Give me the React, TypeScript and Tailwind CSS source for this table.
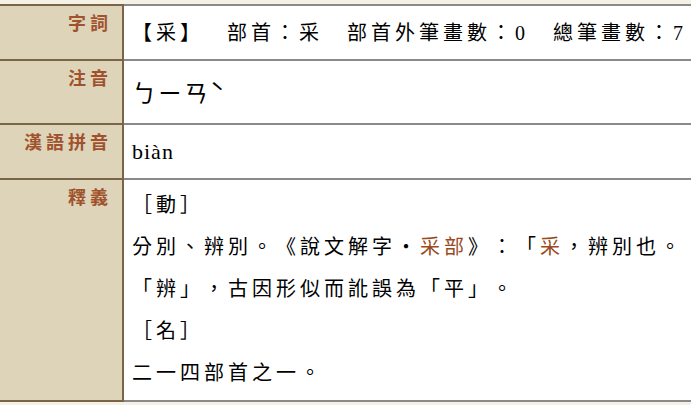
import React from 'react';

const labelCls =
  "w-[124px] shrink-0 bg-[#ddd4ba] border-r-2 border-b-2 border-[#7b6548] text-right pr-[10px] pt-[4px] text-[18px] leading-[24px] font-bold tracking-[4px] text-[#a0522d]";
const cellCls = "flex-1 border-b-2 border-[#8a8a8a] bg-white pl-[8px] text-black [text-spacing-trim:space-all]";

const Hl: React.FC<{ children: React.ReactNode }> = ({ children }) => (
  <span className="text-[#9a4a1c]">{children}</span>
);

export default function App() {
  return (
    <div
      className="h-[405px] w-[691px] overflow-hidden bg-[#f5f1e4] pt-[4px]"
      style={{ fontFamily: '"Liberation Serif", "Noto Sans CJK TC", serif' }}
    >
      <div className="w-full">
        {/* 字詞 */}
        <div className="flex h-[57px]">
          <div className={labelCls + " border-t-2"} style={{ fontFamily: '"Noto Sans CJK TC", sans-serif' }}>字詞</div>
          <div className={cellCls + " border-t-2 flex items-center whitespace-nowrap text-[20px] tracking-[4px]"}>
            <span>【采】</span>
            <span className="ml-[23px]">部首：采</span>
            <span className="ml-[24px]">部首外筆畫數：0</span>
            <span className="ml-[24px]">總筆畫數：7</span>
          </div>
        </div>

        {/* 注音 */}
        <div className="flex h-[64px]">
          <div className={labelCls} style={{ fontFamily: '"Noto Sans CJK TC", sans-serif' }}>注音</div>
          <div className={cellCls + " flex items-center text-[24px] tracking-[2px]"}>
            <span style={{ fontFamily: '"Noto Sans CJK TC", sans-serif' }}>ㄅㄧㄢˋ</span>
          </div>
        </div>

        {/* 漢語拼音 */}
        <div className="flex h-[55px]">
          <div className={labelCls} style={{ fontFamily: '"Noto Sans CJK TC", sans-serif' }}>漢語拼音</div>
          <div className={cellCls + " flex items-center text-[22px] tracking-[1px]"}>biàn</div>
        </div>

        {/* 釋義 */}
        <div className="flex h-[222px]">
          <div className={labelCls} style={{ fontFamily: '"Noto Sans CJK TC", sans-serif' }}>釋義</div>
          <div className={cellCls + " pt-[4px] text-[20px] leading-[42px] tracking-[4px] whitespace-nowrap"}>
            <div>［動］</div>
            <div>
              分別、辨別。《說文解字・<Hl>采部</Hl>》：「<Hl>采</Hl>，辨別也。
            </div>
            <div>「辨」，古因形似而訛誤為「平」。</div>
            <div>［名］</div>
            <div>二一四部首之一。</div>
          </div>
        </div>
      </div>
    </div>
  );
}
